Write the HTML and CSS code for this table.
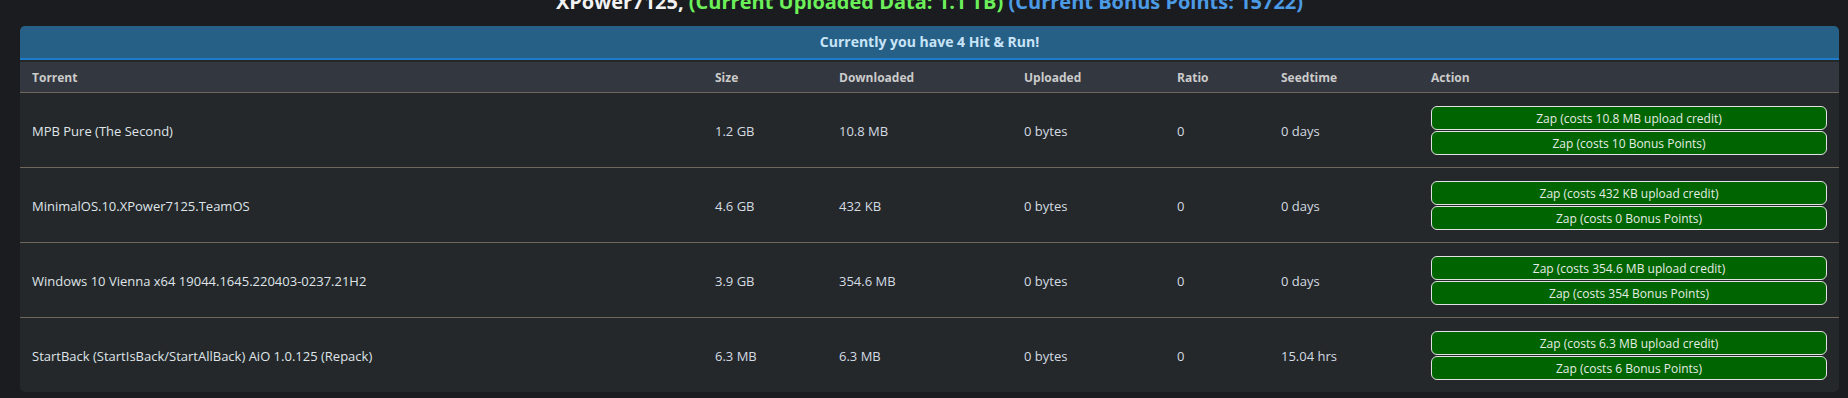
FILE: index.html
```html
<!DOCTYPE html>
<html lang="en">
<head>
    <meta charset="UTF-8">
    <meta name="viewport" content="width=device-width, initial-scale=1.0">
    <title>Hit &amp; Run</title>
    <link rel="stylesheet" href="styles.css">
</head>
<body>
    <div class="container">
        <h2 class="user-line">
            <span class="user">XPower7125,</span>
            <span class="upload">(Current Uploaded Data: 1.1 TB)</span>
            <span class="bonus">(Current Bonus Points: 15722)</span>
        </h2>
        <div class="panel">
            <div class="panel-heading">Currently you have 4 Hit &amp; Run!</div>
            <table class="hnr-table">
                <colgroup>
                    <col class="col-name">
                    <col class="col-size">
                    <col class="col-down">
                    <col class="col-up">
                    <col class="col-ratio">
                    <col class="col-seed">
                    <col class="col-action">
                </colgroup>
                <thead>
                    <tr>
                        <th>Torrent</th>
                        <th>Size</th>
                        <th>Downloaded</th>
                        <th>Uploaded</th>
                        <th>Ratio</th>
                        <th>Seedtime</th>
                        <th>Action</th>
                    </tr>
                </thead>
                <tbody>
                    <tr>
                        <td class="name">MPB Pure (The Second)</td>
                        <td>1.2 GB</td>
                        <td>10.8 MB</td>
                        <td>0 bytes</td>
                        <td>0</td>
                        <td>0 days</td>
                        <td>
                            <button class="zap">Zap (costs 10.8 MB upload credit)</button>
                            <button class="zap">Zap (costs 10 Bonus Points)</button>
                        </td>
                    </tr>
                    <tr>
                        <td class="name">MinimalOS.10.XPower7125.TeamOS</td>
                        <td>4.6 GB</td>
                        <td>432 KB</td>
                        <td>0 bytes</td>
                        <td>0</td>
                        <td>0 days</td>
                        <td>
                            <button class="zap">Zap (costs 432 KB upload credit)</button>
                            <button class="zap">Zap (costs 0 Bonus Points)</button>
                        </td>
                    </tr>
                    <tr>
                        <td class="name">Windows 10 Vienna x64 19044.1645.220403-0237.21H2</td>
                        <td>3.9 GB</td>
                        <td>354.6 MB</td>
                        <td>0 bytes</td>
                        <td>0</td>
                        <td>0 days</td>
                        <td>
                            <button class="zap">Zap (costs 354.6 MB upload credit)</button>
                            <button class="zap">Zap (costs 354 Bonus Points)</button>
                        </td>
                    </tr>
                    <tr>
                        <td class="name">StartBack (StartIsBack/StartAllBack) AiO 1.0.125 (Repack)</td>
                        <td>6.3 MB</td>
                        <td>6.3 MB</td>
                        <td>0 bytes</td>
                        <td>0</td>
                        <td>15.04 hrs</td>
                        <td>
                            <button class="zap">Zap (costs 6.3 MB upload credit)</button>
                            <button class="zap">Zap (costs 6 Bonus Points)</button>
                        </td>
                    </tr>
                </tbody>
            </table>
        </div>
    </div>
</body>
</html>
```

FILE: styles.css
```css
body {
    font-family: "Open Sans", Arial, sans-serif;
    background-color: #1b1c1f;
    color: #d3dbe3;
    margin: 0;
    padding: 0;
}
.container {
    margin: 0 9px 0 20px;
}
.user-line {
    text-align: center;
    font-size: 20px;
    font-weight: bold;
    line-height: 30px;
    margin: -13px 0 9px;
}
.user {
    color: #f2f2f2;
}
.upload {
    color: #6cf05a;
}
.bonus {
    color: #4c9be6;
}
.panel {
    background-color: #25282a;
    border-radius: 5px;
    overflow: hidden;
}
.panel-heading {
    background-color: #276087;
    color: #c8e4f7;
    font-weight: bold;
    font-size: 14px;
    text-align: center;
    height: 32px;
    line-height: 32px;
    border-bottom: 2px solid #1c7cc9;
    margin-bottom: 2px;
}
.hnr-table {
    width: 100%;
    border-collapse: collapse;
    table-layout: fixed;
}
.col-name { width: 683px; }
.col-size { width: 124px; }
.col-down { width: 185px; }
.col-up { width: 153px; }
.col-ratio { width: 104px; }
.col-seed { width: 150px; }
.col-action { width: 420px; }
th {
    background-color: #33373f;
    color: #cbcbcb;
    font-size: 12px;
    font-weight: bold;
    text-align: left;
    height: 30px;
    padding: 0 12px;
    border-bottom: 1px solid #6e675a;
}
td {
    font-size: 13px;
    padding: 13px 12px 12px;
    vertical-align: middle;
    border-top: 1px solid #6e675a;
}
tbody tr:first-child td {
    border-top: none;
}
td.name {
    color: #dfe4e9;
}
.zap {
    display: block;
    width: 100%;
    height: 24px;
    margin: 0 0 1px;
    padding: 0;
    background-color: #006400;
    color: #e6ece6;
    border: 1px solid #e2e2e2;
    border-radius: 6px;
    font-family: "Open Sans", Arial, sans-serif;
    font-size: 12px;
    cursor: pointer;
}
.zap:last-child {
    margin-bottom: 0;
}
```
